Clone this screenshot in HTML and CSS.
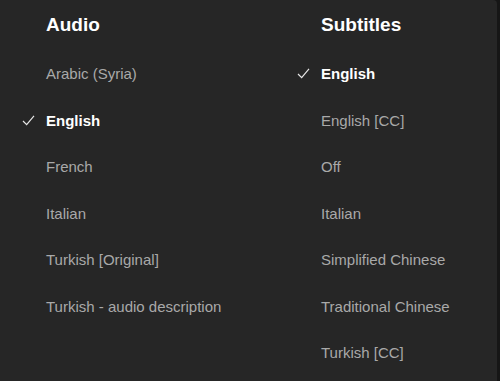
FILE: index.html
```html
<!DOCTYPE html>
<html lang="en">
<head>
<meta charset="UTF-8">
<meta name="viewport" content="width=device-width, initial-scale=1.0">
<title>Audio &amp; Subtitles</title>
<link rel="stylesheet" href="styles.css">
</head>
<body>
<div class="panel">
    <div class="column audio">
        <h2>Audio</h2>
        <ul class="track-list">
            <li>Arabic (Syria)</li>
            <li class="selected">
                <svg class="check" viewBox="0 0 14 12"><polyline points="1,6.5 5,10.5 13,1"/></svg>
                English
            </li>
            <li>French</li>
            <li>Italian</li>
            <li>Turkish [Original]</li>
            <li>Turkish - audio description</li>
        </ul>
    </div>
    <div class="column subtitles">
        <h2>Subtitles</h2>
        <ul class="track-list">
            <li class="selected">
                <svg class="check" viewBox="0 0 14 12"><polyline points="1,6.5 5,10.5 13,1"/></svg>
                English
            </li>
            <li>English [CC]</li>
            <li>Off</li>
            <li>Italian</li>
            <li>Simplified Chinese</li>
            <li>Traditional Chinese</li>
            <li>Turkish [CC]</li>
        </ul>
    </div>
</div>
</body>
</html>
```

FILE: styles.css
```css
body {
    margin: 0;
    background-color: #161616;
    font-family: "Liberation Sans", Arial, sans-serif;
    height: 381px;
    overflow: hidden;
}

.panel {
    display: flex;
    width: 497px;
    height: 381px;
    background-color: #262626;
    border-top-right-radius: 4px;
}

.audio {
    width: 275px;
}

.subtitles {
    flex: 1;
}

.column h2 {
    margin: 0;
    padding: 13px 0 0 46px;
    height: 38px;
    font-size: 19px;
    font-weight: bold;
    color: #fff;
    line-height: 24px;
}

.track-list {
    list-style: none;
    margin: 0;
    padding: 0;
}

.track-list li {
    position: relative;
    height: 46.5px;
    line-height: 46.5px;
    padding-left: 46px;
    font-size: 15px;
    color: #a9a9a9;
}

.track-list li.selected {
    color: #fff;
    font-weight: bold;
}

.check {
    position: absolute;
    left: 22px;
    top: 17px;
    width: 13px;
    height: 11px;
    fill: none;
    stroke: #e8e8e8;
    stroke-width: 1.3;
}
```
